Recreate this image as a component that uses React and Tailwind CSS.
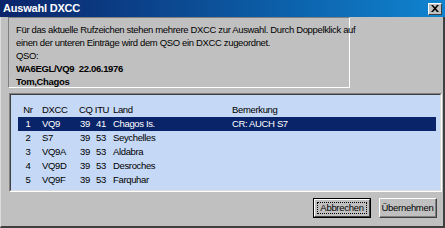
import React from 'react';

const rows = [
    { nr: 1, dxcc: 'VQ9', cq: 39, itu: 41, land: 'Chagos Is.', note: 'CR: AUCH S7' },
    { nr: 2, dxcc: 'S7', cq: 39, itu: 53, land: 'Seychelles', note: '' },
    { nr: 3, dxcc: 'VQ9A', cq: 39, itu: 53, land: 'Aldabra', note: '' },
    { nr: 4, dxcc: 'VQ9D', cq: 39, itu: 53, land: 'Desroches', note: '' },
    { nr: 5, dxcc: 'VQ9F', cq: 39, itu: 53, land: 'Farquhar', note: '' },
];

const font = { fontFamily: '"Liberation Sans", Arial, sans-serif' };

function HeaderRow() {
    return (
        <div className="flex h-[14px] items-center leading-none whitespace-nowrap text-black">
            <div className="w-[20px] text-center">Nr</div>
            <div className="w-[40px] pl-[4px]">DXCC</div>
            <div className="w-[33px] pl-[1px]">CQ ITU</div>
            <div className="w-[119px] pl-[2px]">Land</div>
            <div className="flex-1 pl-[2px]">Bemerkung</div>
        </div>
    );
}

function Row({ row, selected }) {
    return (
        <div className={'flex h-[14px] items-center leading-none whitespace-nowrap ' + (selected ? 'bg-[#0a246a] text-white' : 'text-black')}>
            <div className="w-[20px] text-center">{row.nr}</div>
            <div className="w-[40px] pl-[4px]">{row.dxcc}</div>
            <div className="w-[13px] pl-[2px]">{row.cq}</div>
            <div className="w-[20px] pl-[5px]">{row.itu}</div>
            <div className="w-[119px] pl-[2px]">{row.land}</div>
            <div className="flex-1 pl-[2px]">{row.note}</div>
        </div>
    );
}

function Button({ children, isDefault }) {
    if (isDefault) {
        return (
            <div className="w-[58px] h-[20px] border border-black">
                <div className="w-full h-full border-t border-l border-t-white border-l-white border-r border-b border-r-[#404040] border-b-[#404040] p-[2px]">
                    <div className="w-full h-full border border-dotted border-black flex items-center justify-center text-[9.5px] tracking-[-0.3px] leading-none">
                        {children}
                    </div>
                </div>
            </div>
        );
    }
    return (
        <div className="w-[58px] h-[20px] border-t border-l border-t-white border-l-white border-r border-b border-r-[#404040] border-b-[#404040]">
            <div className="w-full h-full border-r border-b border-r-[#808080] border-b-[#808080] flex items-center justify-center text-[9.5px] tracking-[-0.3px] leading-none">
                {children}
            </div>
        </div>
    );
}

export default function App() {
    return (
        <div className="w-[445px] h-[228px] bg-[#c0c0c0] flex flex-col overflow-hidden" style={font}>
            {/* title bar */}
            <div className="h-[17px] flex items-center justify-between pl-[3px] pr-[3px] bg-gradient-to-r from-[#0a246a] to-[#1084d0]">
                <span className="text-white font-bold text-[11px] tracking-[-0.2px] leading-none">Auswahl DXCC</span>
                <div className="w-[14px] h-[12px] bg-[#c0c0c0] border-t border-l border-t-white border-l-white border-r border-b border-r-[#404040] border-b-[#404040] flex items-center justify-center">
                    <svg width="8" height="7" viewBox="0 0 8 7">
                        <path d="M0 0h2l2 2.2L6 0h2L5 3.5 8 7H6L4 4.8 2 7H0l3-3.5z" fill="#000" />
                    </svg>
                </div>
            </div>

            <div className="flex-1 flex flex-col border-l border-l-[#dcdcdc] border-r-2 border-r-[#404040] border-b-2 border-b-[#404040]">
                {/* info bevel */}
                <div className="ml-[7px] w-[342px] h-[71px] border-t border-l border-t-[#808080] border-l-[#808080] border-r border-b border-r-white border-b-white pl-[7px] pt-[5px] text-[9.5px] tracking-[-0.35px] leading-[13px] text-black whitespace-nowrap">
                    <div>Für das aktuelle Rufzeichen stehen mehrere DXCC zur Auswahl. Durch Doppelklick auf</div>
                    <div>einen der unteren Einträge wird dem QSO ein DXCC zugeordnet.</div>
                    <div>QSO:</div>
                    <div className="font-bold whitespace-pre">WA6EGL/VQ9  22.06.1976</div>
                    <div className="font-bold">Tom,Chagos</div>
                </div>

                {/* list */}
                <div className="mt-[5px] ml-[8px] w-[433px] h-[99px] bg-[#c5d8f5] border-t border-l border-t-[#808080] border-l-[#808080] border-r border-b border-r-white border-b-white">
                    <div className="w-full h-full border-t border-l border-t-[#404040] border-l-[#404040] border-r border-b border-r-[#dcdcdc] border-b-[#dcdcdc] pl-[7px] pr-[4px] pt-[8px] text-[9.5px] tracking-[-0.35px]">
                        <HeaderRow />
                        {rows.map(r => (
                            <Row key={r.nr} row={r} selected={r.nr === 1} />
                        ))}
                    </div>
                </div>

                {/* buttons */}
                <div className="mt-[6px] flex justify-end gap-[8px] pr-[6px]">
                    <Button isDefault>Abbrechen</Button>
                    <Button>Übernehmen</Button>
                </div>
            </div>
        </div>
    );
}
